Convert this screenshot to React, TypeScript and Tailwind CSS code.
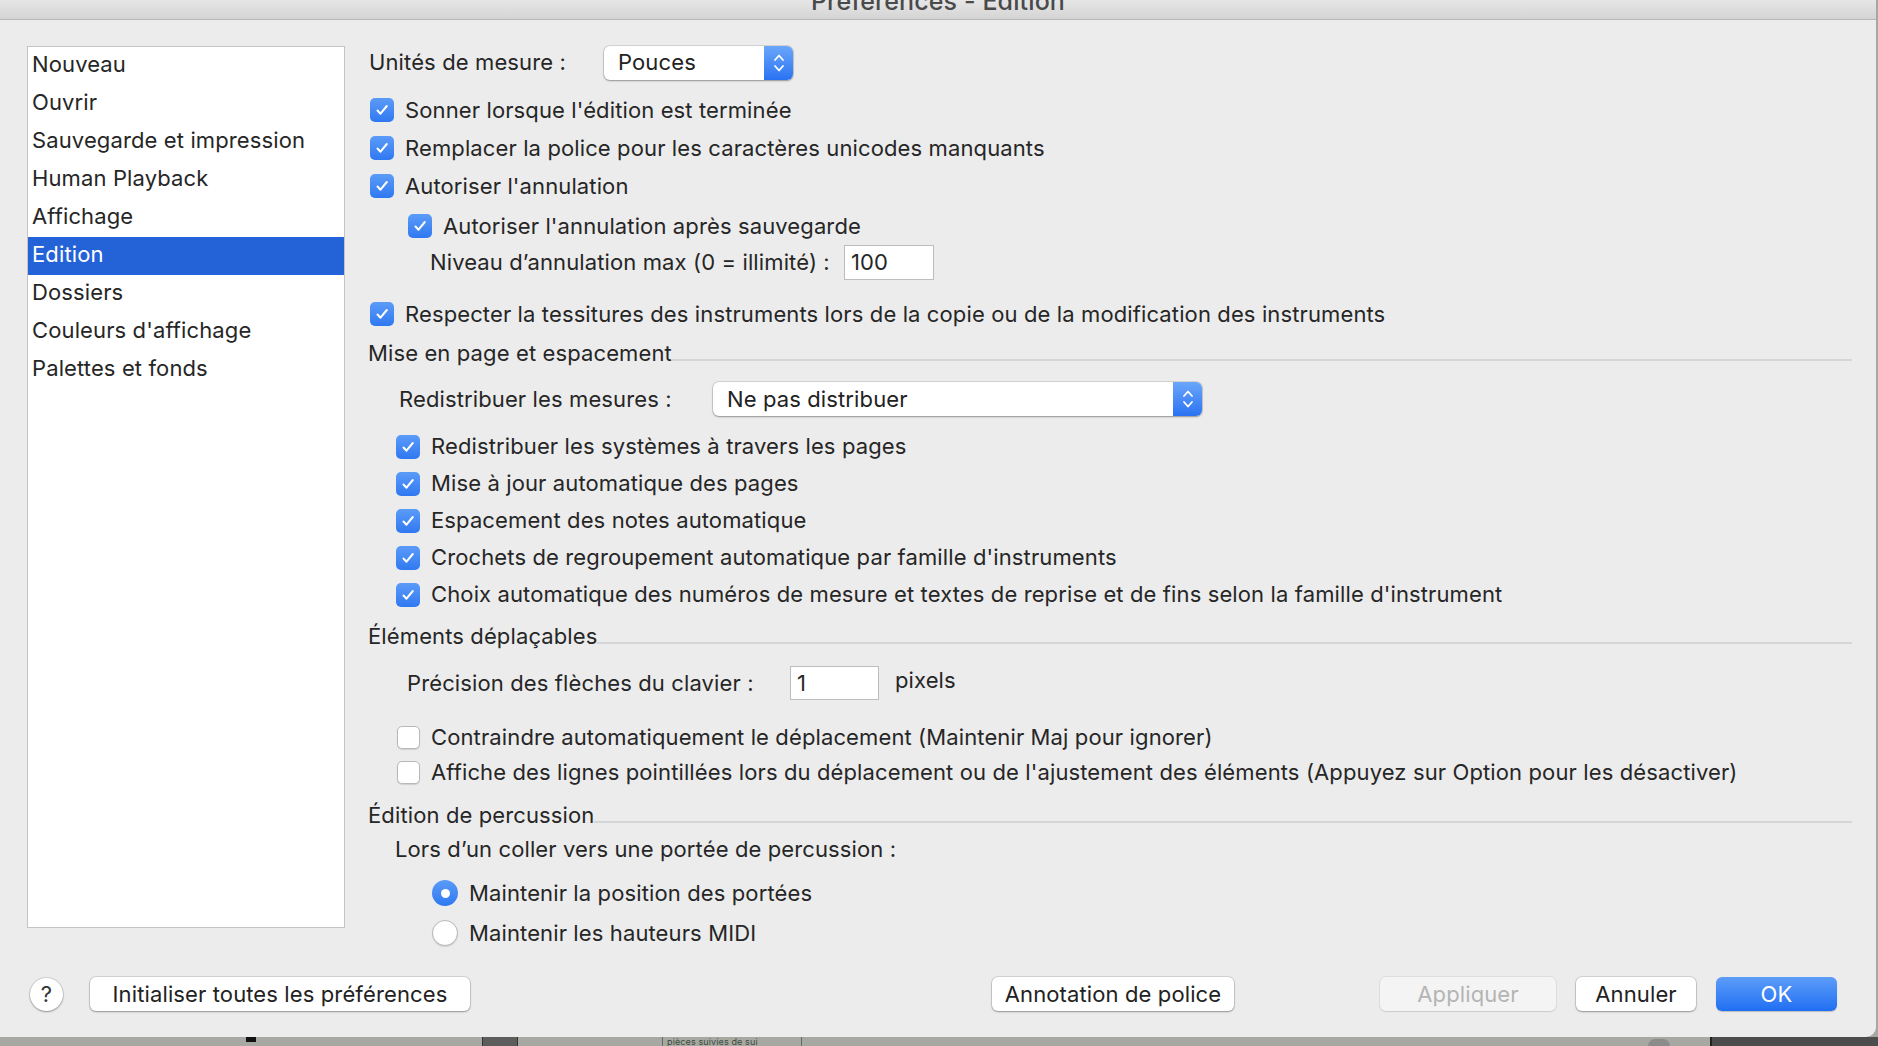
const font = "font-['Inter','Liberation_Sans',sans-serif]";

function Check({ checked = true }: { checked?: boolean }) {
  if (!checked) {
    return (
      <span className="block h-[23px] w-[23px] shrink-0 rounded-[5px] border border-[#b8b8b8] bg-white shadow-[0_1px_1px_rgba(0,0,0,0.12)]" />
    );
  }
  return (
    <span className="flex h-[24px] w-[24px] shrink-0 items-center justify-center rounded-[5px] bg-gradient-to-b from-[#5b9bf8] to-[#2f78f1]">
      <svg width="16" height="16" viewBox="0 0 16 16" fill="none">
        <path d="M3.5 8.5l3 3.2L12.8 4" stroke="white" strokeWidth="2" strokeLinecap="round" strokeLinejoin="round" />
      </svg>
    </span>
  );
}

function Radio({ checked }: { checked?: boolean }) {
  if (checked) {
    return (
      <span className="flex h-[26px] w-[26px] shrink-0 items-center justify-center rounded-full bg-gradient-to-b from-[#5b9bf8] to-[#2f78f1]">
        <span className="h-[9px] w-[9px] rounded-full bg-white" />
      </span>
    );
  }
  return <span className="block h-[26px] w-[26px] shrink-0 rounded-full border border-[#b8b8b8] bg-white shadow-[0_1px_1px_rgba(0,0,0,0.12)]" />;
}

function Popup({ value, className }: { value: string; className: string }) {
  return (
    <div className={`flex h-[34px] items-stretch rounded-[6px] bg-white shadow-[0_0_0_1px_rgba(0,0,0,0.1),0_1px_2px_rgba(0,0,0,0.3)] ${className}`}>
      <span className="flex flex-1 items-center pl-[14px] text-[22px] text-[#222]">{value}</span>
      <span className="flex w-[29px] items-center justify-center rounded-r-[6px] bg-gradient-to-b from-[#6aa6fa] to-[#2a72f2]">
        <svg width="14" height="22" viewBox="0 0 14 22" fill="none">
          <path d="M3 8l4-4.5L11 8M3 14l4 4.5 4-4.5" stroke="white" strokeWidth="1.8" strokeLinecap="round" strokeLinejoin="round" />
        </svg>
      </span>
    </div>
  );
}

function CheckRow({ label, checked = true, className = "" }: { label: string; checked?: boolean; className?: string }) {
  return (
    <div className={`flex items-center ${className}`}>
      <Check checked={checked} />
      <span className="ml-[11px] whitespace-nowrap">{label}</span>
    </div>
  );
}

function Header({ label, className = "" }: { label: string; className?: string }) {
  return (
    <div className={`flex h-[30px] items-center ${className}`}>
      <span className="whitespace-nowrap">{label}</span>
      <span className="mb-[7px] h-[2px] flex-1 self-end bg-[#d6d6d6]" />
    </div>
  );
}

function Button({ label, className = "", disabled }: { label: string; className?: string; disabled?: boolean }) {
  return (
    <button
      type="button"
      className={`flex h-[34px] items-center justify-center rounded-[6px] text-[22px] ${
        disabled
          ? "bg-[#f4f4f4] text-[#b4b4b4] shadow-[0_0_0_1px_rgba(0,0,0,0.06),0_1px_1px_rgba(0,0,0,0.08)]"
          : "bg-white text-[#222] shadow-[0_0_0_1px_rgba(0,0,0,0.1),0_1px_2px_rgba(0,0,0,0.3)]"
      } ${className}`}
    >
      {label}
    </button>
  );
}

const sidebar = [
  "Nouveau",
  "Ouvrir",
  "Sauvegarde et impression",
  "Human Playback",
  "Affichage",
  "Edition",
  "Dossiers",
  "Couleurs d'affichage",
  "Palettes et fonds",
];

const layoutChecks = [
  "Redistribuer les systèmes à travers les pages",
  "Mise à jour automatique des pages",
  "Espacement des notes automatique",
  "Crochets de regroupement automatique par famille d'instruments",
  "Choix automatique des numéros de mesure et textes de reprise et de fins selon la famille d'instrument",
];

export default function App() {
  return (
    <div className={`flex h-[1046px] w-[1878px] flex-col overflow-hidden bg-[#a8a8a2] text-[22px] tracking-[0.12px] text-[#262626] ${font}`}>
      <div className="flex h-[1037px] w-[1876px] flex-col overflow-hidden rounded-br-[10px] bg-[#ececec]">
        {/* title bar */}
        <div className="flex h-[20px] shrink-0 justify-center overflow-hidden border-b border-[#b8b8b8] bg-gradient-to-b from-[#e6e6e6] to-[#d4d4d4]">
          <span className="-mt-[11px] text-[25px] font-medium leading-[25px] text-[#4a4a4a]">Préférences - Edition</span>
        </div>

        <div className="flex h-[939px] shrink-0">
          {/* category list */}
          <div className="ml-[27px] mt-[26px] h-[882px] w-[318px] border border-[#c4c4c4] bg-white">
            {sidebar.map((item) => (
              <div
                key={item}
                className={`flex h-[38px] items-center pb-[3px] pl-[4px] ${item === "Edition" ? "bg-[#2463d7] text-white" : ""}`}
              >
                {item}
              </div>
            ))}
          </div>

          {/* settings */}
          <div className="ml-[23px] mr-[24px] mt-[26px] flex flex-1 flex-col">
            <div className="flex h-[33px] items-center">
              <span className="w-[236px] pl-[1px]">Unités de mesure :</span>
              <Popup value="Pouces" className="w-[189px]" />
            </div>
            <CheckRow className="mt-[12px] h-[38px] pl-[2px]" label="Sonner lorsque l'édition est terminée" />
            <CheckRow className="h-[38px] pl-[2px]" label="Remplacer la police pour les caractères unicodes manquants" />
            <CheckRow className="h-[38px] pl-[2px]" label="Autoriser l'annulation" />
            <CheckRow className="mt-[2px] h-[38px] pl-[40px]" label="Autoriser l'annulation après sauvegarde" />
            <div className="flex h-[35px] items-center pl-[62px]">
              <span className="w-[414px] whitespace-nowrap">Niveau d’annulation max (0 = illimité) :</span>
              <span className="flex h-[35px] w-[90px] items-center border border-[#bdbdbd] bg-white pl-[6px]">100</span>
            </div>
            <CheckRow
              className="mt-[15px] h-[38px] pl-[2px]"
              label="Respecter la tessitures des instruments lors de la copie ou de la modification des instruments"
            />

            <Header className="mt-[5px]" label="Mise en page et espacement" />
            <div className="mt-[14px] flex h-[34px] items-center pl-[31px]">
              <span className="w-[314px] whitespace-nowrap">Redistribuer les mesures :</span>
              <Popup value="Ne pas distribuer" className="w-[489px]" />
            </div>
            <div className="mt-[12px] flex flex-col">
              {layoutChecks.map((label) => (
                <CheckRow key={label} className="h-[37px] pl-[28px]" label={label} />
              ))}
            </div>

            <Header className="mt-[8px]" label="Éléments déplaçables" />
            <div className="mt-[15px] flex h-[34px] items-center pl-[39px]">
              <span className="w-[383px] whitespace-nowrap">Précision des flèches du clavier :</span>
              <span className="flex h-[34px] w-[89px] items-center border border-[#bdbdbd] bg-white pl-[6px]">1</span>
              <span className="-mt-[5px] ml-[16px]">pixels</span>
            </div>
            <CheckRow
              checked={false}
              className="mt-[20px] h-[35px] pl-[29px]"
              label="Contraindre automatiquement le déplacement (Maintenir Maj pour ignorer)"
            />
            <CheckRow
              checked={false}
              className="h-[35px] pl-[29px]"
              label="Affiche des lignes pointillées lors du déplacement ou de l'ajustement des éléments (Appuyez sur Option pour les désactiver)"
            />

            <Header className="mt-[10px]" label="Édition de percussion" />
            <div className="mt-[3px] flex h-[32px] items-center pl-[27px]">Lors d’un coller vers une portée de percussion :</div>
            <div className="mt-[8px] flex h-[40px] items-center pl-[64px]">
              <Radio checked />
              <span className="ml-[11px]">Maintenir la position des portées</span>
            </div>
            <div className="flex h-[40px] items-center pl-[64px]">
              <Radio />
              <span className="ml-[11px]">Maintenir les hauteurs MIDI</span>
            </div>
          </div>
        </div>

        {/* footer */}
        <div className="mt-[18px] flex h-[34px] shrink-0 items-center">
          <button
            type="button"
            className="ml-[30px] flex h-[33px] w-[33px] items-center justify-center rounded-full bg-white text-[22px] text-[#333] shadow-[0_0_0_1px_rgba(0,0,0,0.1),0_1px_2px_rgba(0,0,0,0.3)]"
          >
            ?
          </button>
          <Button className="ml-[27px] w-[380px]" label="Initialiser toutes les préférences" />
          <Button className="ml-[522px] w-[242px]" label="Annotation de police" />
          <Button className="ml-[146px] w-[176px]" label="Appliquer" disabled />
          <Button className="ml-[20px] w-[120px]" label="Annuler" />
          <button
            type="button"
            className="ml-[20px] flex h-[34px] w-[121px] items-center justify-center rounded-[6px] bg-gradient-to-b from-[#5c9cf9] to-[#1f6ef2] text-[22px] text-white shadow-[0_1px_1px_rgba(0,0,0,0.2)]"
          >
            OK
          </button>
        </div>
      </div>

      {/* desktop strip behind the window */}
      <div className="flex h-[9px] shrink-0 items-start">
        <span className="ml-[246px] h-[5px] w-[10px] bg-[#111]" />
        <span className="ml-[226px] h-[9px] w-[36px] border-x border-[#333] bg-[#5d5d5d]" />
        <span className="ml-[144px] flex h-[9px] w-[140px] items-end overflow-hidden border-x border-[#5c6e5f] pl-[4px] text-[9px] leading-[9px] text-[#3a4a3d]">
          pièces suivies de sui
        </span>
        <span className="ml-[846px] mt-[2px] h-[14px] w-[22px] rounded-full bg-[#8c8c8c]" />
        <span className="ml-[40px] h-[9px] flex-1 border-l-2 border-[#222] bg-[#4c4c4c]" />
      </div>
    </div>
  );
}
